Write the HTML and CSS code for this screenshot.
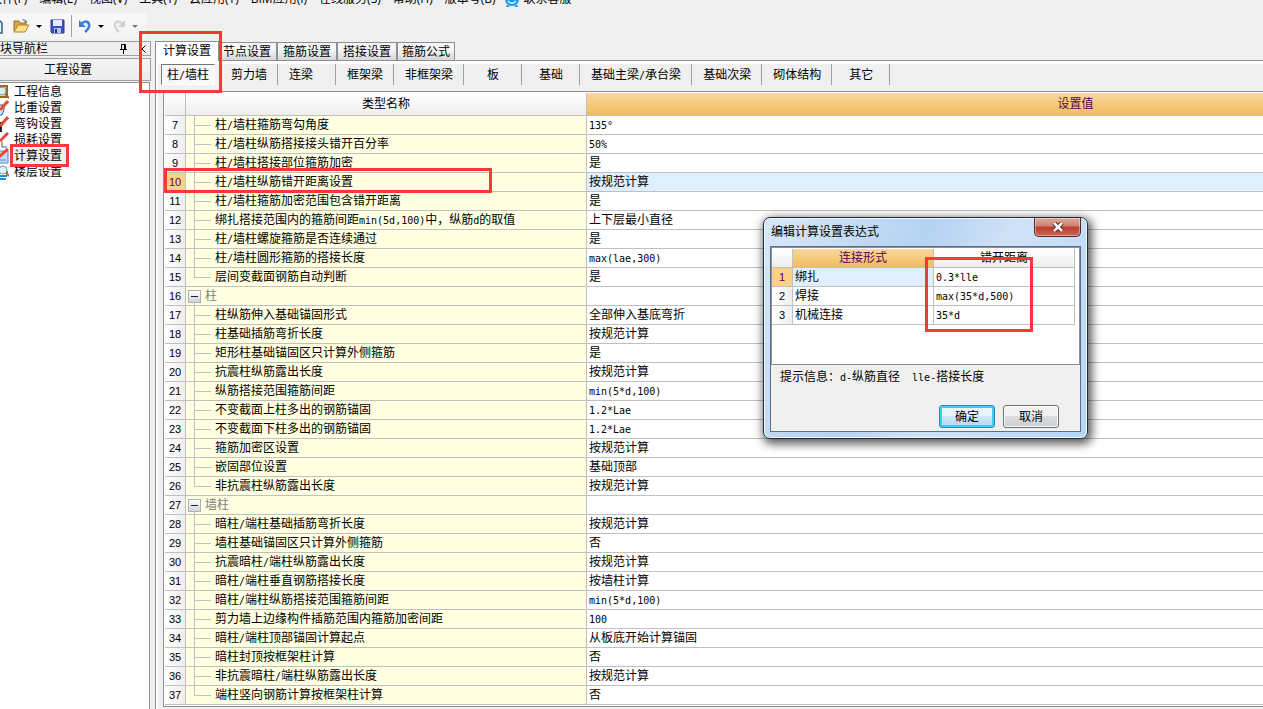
FILE: index.html
```html
<!DOCTYPE html>
<html lang="zh-CN">
<head>
<meta charset="utf-8">
<title>工程设置</title>
<link rel="stylesheet" href="styles.css">
</head>
<body>
<div class="app">
  <nav class="menu">
    <a href="#">文件(F)</a><a href="#">编辑(E)</a><a href="#">视图(V)</a><a href="#">工具(T)</a><a href="#">云应用(Y)</a><a href="#">BIM应用(I)</a><a href="#">在线服务(S)</a><a href="#">帮助(H)</a><a href="#">版本号(B)</a>
    <a href="#" class="service"><svg width="14" height="16" viewBox="0 0 14 16"><circle cx="7" cy="8" r="7" fill="#1c9ceb"/><path d="M2 13l-1 3h4zM12 13l1 3H9z" fill="#1c9ceb"/><path d="M3 9q4 5 8 0v2q-4 4-8 0z" fill="#d9f1ff"/></svg>联系客服</a>
  </nav>
  <div class="toolbar">
    <button class="tool new" aria-label="新建"><svg width="16" height="16" viewBox="0 0 16 16"><path d="M2 1h8l4 4v10H2z" fill="#eaf4ff" stroke="#35598c" stroke-width="1.5"/></svg></button>
    <button class="tool" aria-label="打开"><svg width="17" height="16" viewBox="0 0 17 16"><path d="M1 13V3h5l1 2h6v3" fill="#d9a648" stroke="#9a6d1c"/><path d="M1 14l4-7h11l-4 7z" fill="#ffdf88" stroke="#b98225"/><path d="M8 2q4-2 5 1l1-1v3h-3l1-1q-1-2-4-2z" fill="#6d8fb5"/></svg></button>
    <span class="arrow"></span>
    <button class="tool" aria-label="保存"><svg width="15" height="15" viewBox="0 0 15 15"><path d="M1 1h13v13H2L1 13z" fill="#3c50c8" stroke="#2b3796"/><path d="M3 1h9v6H3z" fill="#e6ecff"/><path d="M4 9h7v5H4z" fill="#b9c3e6"/><path d="M5 10h2v4H5z" fill="#27326e"/></svg></button>
    <span class="divider"></span>
    <button class="tool" aria-label="撤销"><svg width="14" height="14" viewBox="0 0 14 14"><path d="M3 5q6-5 8 0 1 4-4 8" fill="none" stroke="#3f7bd4" stroke-width="2.6"/><path d="M1 1v7h7z" fill="#3f7bd4"/></svg></button>
    <span class="arrow"></span>
    <button class="tool" aria-label="重做"><svg width="14" height="14" viewBox="0 0 14 14"><path d="M11 5q-6-5-8 0-1 4 4 8" fill="none" stroke="#d2d2d2" stroke-width="2.4"/><path d="M13 1v7H6z" fill="#d2d2d2"/></svg></button>
    <span class="arrow dim"></span>
  </div>
  <div class="work">
    <aside class="side">
      <div class="dock"><span>块导航栏</span>
        <button class="tool pin" aria-label="固定"><svg width="7" height="10" viewBox="0 0 7 10"><path d="M1.500.500h4v5h-4zM0 5.500h7M3.500 6v4M4.500 1v4" fill="none" stroke="#000"/></svg></button>
        <button class="tool" aria-label="收起"><svg width="5" height="8" viewBox="0 0 5 8"><path d="M4.500.500L1 4l3.500 3.500" fill="none" stroke="#000"/></svg></button>
      </div>
      <button class="group">工程设置</button>
      <ul class="tree">
        <li><svg width="16" height="16" viewBox="0 0 16 16"><path d="M4 2h10v11H4z" fill="#f4dfa8" stroke="#94671a" stroke-width="2"/><circle cx="9" cy="7" r="4" fill="#d7eefb" stroke="#8d99a3"/><path d="M12 10l4 4" stroke="#a86a26" stroke-width="2"/></svg><a href="#">工程信息</a></li>
        <li><svg width="16" height="16" viewBox="0 0 16 16"><path d="M5 5h6v5l-2 5H5" fill="#cfe3fa" stroke="#2a5b9c"/><path d="M7 10l8-9" stroke="#e94b32" stroke-width="3"/></svg><a href="#">比重设置</a></li>
        <li><svg width="16" height="16" viewBox="0 0 16 16"><path d="M4 7h6l-2 3v5H5" fill="none" stroke="#222" stroke-width="2"/><path d="M7 10l8-9" stroke="#e94b32" stroke-width="3"/></svg><a href="#">弯钩设置</a></li>
        <li><svg width="16" height="16" viewBox="0 0 16 16"><path d="M4 7q3 0 5 3v5h5" fill="none" stroke="#3b5f86"/><path d="M7 9l8-8" stroke="#e94b32" stroke-width="3"/></svg><a href="#">损耗设置</a></li>
        <li class="on"><svg width="16" height="16" viewBox="0 0 16 16"><path d="M3 3h12v12H3z" fill="#c4defa" stroke="#5585bf"/><path d="M7 12h6" stroke="#5585bf"/><path d="M6 9l9-8" stroke="#e94b32" stroke-width="3"/></svg><a href="#">计算设置</a></li>
        <li><svg width="16" height="16" viewBox="0 0 16 16"><path d="M4 4h10M4 8h11M4 12h10M5 15h8" stroke="#2886d2" stroke-width="2"/><circle cx="10" cy="6" r="4" fill="#e0f3fc" stroke="#8d99a3"/><path d="M13 9l3 3" stroke="#a86a26" stroke-width="2"/></svg><a href="#">楼层设置</a></li>
      </ul>
    </aside>
    <main class="main">
      <div class="tabs" role="tablist">
        <button class="tab active">计算设置</button><button class="tab">节点设置</button><button class="tab">箍筋设置</button><button class="tab">搭接设置</button><button class="tab">箍筋公式</button>
      </div>
      <div class="page">
        <div class="kinds">
          <button class="kind pressed">柱<i>/</i>墙柱</button><button class="kind">剪力墙</button><button class="kind left">连梁</button><button class="kind">框架梁</button><button class="kind">非框架梁</button><button class="kind">板</button><button class="kind">基础</button><button class="kind">基础主梁<i>/</i>承台梁</button><button class="kind">基础次梁</button><button class="kind">砌体结构</button><button class="kind">其它</button>
        </div>
        <div class="sheet">
          <table class="grid settings">
            <colgroup><col class="c-num"><col class="c-name"><col class="c-value"></colgroup>
            <thead><tr><th></th><th>类型名称</th><th class="hot">设置值</th></tr></thead>
            <tbody>
              <tr><th>7</th><td>柱<i>/</i>墙柱箍筋弯勾角度</td><td><i>135°</i></td></tr>
              <tr><th>8</th><td>柱<i>/</i>墙柱纵筋搭接接头错开百分率</td><td><i>50%</i></td></tr>
              <tr><th>9</th><td>柱<i>/</i>墙柱搭接部位箍筋加密</td><td>是</td></tr>
              <tr class="sel"><th>10</th><td>柱<i>/</i>墙柱纵筋错开距离设置</td><td>按规范计算</td></tr>
              <tr><th>11</th><td>柱<i>/</i>墙柱箍筋加密范围包含错开距离</td><td>是</td></tr>
              <tr><th>12</th><td>绑扎搭接范围内的箍筋间距<i>min(5d,100)</i>中，纵筋<i>d</i>的取值</td><td>上下层最小直径</td></tr>
              <tr><th>13</th><td>柱<i>/</i>墙柱螺旋箍筋是否连续通过</td><td>是</td></tr>
              <tr><th>14</th><td>柱<i>/</i>墙柱圆形箍筋的搭接长度</td><td><i>max(lae,300)</i></td></tr>
              <tr class="last"><th>15</th><td>层间变截面钢筋自动判断</td><td>是</td></tr>
              <tr class="parent"><th>16</th><td><button class="fold" aria-label="折叠"></button>柱</td><td></td></tr>
              <tr><th>17</th><td>柱纵筋伸入基础锚固形式</td><td>全部伸入基底弯折</td></tr>
              <tr><th>18</th><td>柱基础插筋弯折长度</td><td>按规范计算</td></tr>
              <tr><th>19</th><td>矩形柱基础锚固区只计算外侧箍筋</td><td>是</td></tr>
              <tr><th>20</th><td>抗震柱纵筋露出长度</td><td>按规范计算</td></tr>
              <tr><th>21</th><td>纵筋搭接范围箍筋间距</td><td><i>min(5*d,100)</i></td></tr>
              <tr><th>22</th><td>不变截面上柱多出的钢筋锚固</td><td><i>1.2*Lae</i></td></tr>
              <tr><th>23</th><td>不变截面下柱多出的钢筋锚固</td><td><i>1.2*Lae</i></td></tr>
              <tr><th>24</th><td>箍筋加密区设置</td><td>按规范计算</td></tr>
              <tr><th>25</th><td>嵌固部位设置</td><td>基础顶部</td></tr>
              <tr class="last"><th>26</th><td>非抗震柱纵筋露出长度</td><td>按规范计算</td></tr>
              <tr class="parent"><th>27</th><td><button class="fold" aria-label="折叠"></button>墙柱</td><td></td></tr>
              <tr><th>28</th><td>暗柱<i>/</i>端柱基础插筋弯折长度</td><td>按规范计算</td></tr>
              <tr><th>29</th><td>墙柱基础锚固区只计算外侧箍筋</td><td>否</td></tr>
              <tr><th>30</th><td>抗震暗柱<i>/</i>端柱纵筋露出长度</td><td>按规范计算</td></tr>
              <tr><th>31</th><td>暗柱<i>/</i>端柱垂直钢筋搭接长度</td><td>按墙柱计算</td></tr>
              <tr><th>32</th><td>暗柱<i>/</i>端柱纵筋搭接范围箍筋间距</td><td><i>min(5*d,100)</i></td></tr>
              <tr><th>33</th><td>剪力墙上边缘构件插筋范围内箍筋加密间距</td><td><i>100</i></td></tr>
              <tr><th>34</th><td>暗柱<i>/</i>端柱顶部锚固计算起点</td><td>从板底开始计算锚固</td></tr>
              <tr><th>35</th><td>暗柱封顶按框架柱计算</td><td>否</td></tr>
              <tr><th>36</th><td>非抗震暗柱<i>/</i>端柱纵筋露出长度</td><td>按规范计算</td></tr>
              <tr class="last"><th>37</th><td>端柱竖向钢筋计算按框架柱计算</td><td>否</td></tr>
            </tbody>
          </table>
        </div>
      </div>
    </main>
  </div>
  <section class="dialog" role="dialog" aria-label="编辑计算设置表达式">
    <header class="title"><span>编辑计算设置表达式</span>
      <button class="close" aria-label="关闭"><svg width="12" height="10" viewBox="0 0 12 10"><path d="M2 1l8 8M10 1L2 9" stroke="#46262a" stroke-width="4.500"/><path d="M2 1l8 8M10 1L2 9" stroke="#fff" stroke-width="2.500"/></svg></button>
    </header>
    <div class="body">
      <div class="list">
        <table class="grid exprs">
          <colgroup><col class="c-num"><col class="c-form"><col class="c-dist"></colgroup>
          <thead><tr><th></th><th class="hot">连接形式</th><th>错开距离</th></tr></thead>
          <tbody>
            <tr class="sel"><th>1</th><td>绑扎</td><td><i>0.3*lle</i></td></tr>
            <tr><th>2</th><td>焊接</td><td><i>max(35*d,500)</i></td></tr>
            <tr><th>3</th><td>机械连接</td><td><i>35*d</i></td></tr>
          </tbody>
        </table>
      </div>
      <p class="hint">提示信息：<i>d-</i>纵筋直径　<i>lle-</i>搭接长度</p>
      <div class="actions"><button class="btn primary">确定</button><button class="btn">取消</button></div>
    </div>
  </section>
  <div class="mark mark-tab"></div>
  <div class="mark mark-tree"></div>
  <div class="mark mark-row"></div>
  <div class="mark mark-expr"></div>
</div>
</body>
</html>
```
FILE: styles.css
```css
* { box-sizing: border-box; }
body {
  margin: 0;
  background: #f0f0f0;
  color: #000;
  font: 12px/18px "Liberation Sans", "Noto Sans CJK SC", sans-serif;
}
button { font: inherit; color: inherit; margin: 0; padding: 0; border: 0; background: none; white-space: nowrap; }
a { color: inherit; text-decoration: none; }
i { font: 10px/12px "DejaVu Sans Mono", monospace; }
svg { display: block; flex: none; }
.app { position: relative; min-height: 100vh; overflow: hidden; display: flex; flex-direction: column; }

.menu { display: flex; gap: 12px; height: 16px; margin: -9px 0 0 -10px; line-height: 16px; white-space: nowrap; font-family: "Open Sans", "Noto Sans CJK SC", sans-serif; }
.service { display: flex; gap: 5px; margin-left: -3px; }

.toolbar { display: flex; align-items: center; align-self: flex-start; height: 26px; width: 146px; margin: 6px 0 2px; background: linear-gradient(#f8f8f8, #f4f4f4); }
.tool { flex: none; display: flex; }
.tool.new { margin: 0 9px 0 -12px; }
.arrow { border: 3px solid transparent; border-top-color: #000; border-bottom: 0; margin: 0 8px 0 6px; }
.arrow.dim { border-top-color: #777; }
.divider { width: 1px; height: 22px; background: #a0a0a0; margin: 0 6px 0 6px; }

.work { display: flex; flex: 1; }
.side { display: flex; flex-direction: column; flex: none; width: 151px; }
.dock { display: flex; align-items: center; height: 15px; border: 1px solid #a0a0a0; border-left: 0; padding-right: 4px; }
.dock span { flex: 1; }
.pin { margin-right: 14px; }
.group { height: 23px; margin-top: 2px; padding-right: 14px; border: 1px solid #a0a0a0; border-left: 0; background: linear-gradient(#f4f4f4, #ececec); }
.tree { flex: 1; list-style: none; margin: 1px 1px 0 0; padding: 1px 0; background: #fff; border: solid #8c8e99; border-width: 1px 1px 0 0; }
.tree li { display: flex; height: 16px; line-height: 16px; margin-left: -7px; gap: 3px; }
.tree a { padding: 0 2px; }
.tree .on a { background: #eee; border-radius: 2px; padding-right: 4px; }

.main { flex: 1; min-width: 0; margin-left: 4px; display: flex; flex-direction: column; }
.tabs { display: flex; align-items: flex-end; height: 19px; }
.tab { width: 60px; height: 18px; border: 1px solid #8c8e99; border-bottom: 0; background: linear-gradient(#f6f6f6 40%, #d6d6d8); }
.tab.active { width: 64px; height: 20px; background: #fff; margin: 0 -2px -1px 0; padding-bottom: 1px; z-index: 1; }
.tab:last-child { width: 58px; }
.page { flex: 1; border: solid #8c8e99; border-width: 1px 0 0 1px; padding-left: 7px; box-shadow: inset 2px 3px #fff; }
.kinds { display: flex; height: 30px; padding-top: 3px; margin-left: -2px; }
.kind { min-width: 58px; height: 21px; padding: 0 10px 0 11px; border-right: 1px solid #a0a0a0; }
.kind.left { padding-right: 22px; }
.kind.pressed { min-width: 54px; margin-right: 5px; padding: 0; border: 1px solid #fff; border-top-color: #777; border-left-color: #777; background: #f8f8f8; }
.sheet { overflow: hidden; border: solid #8c8e99; border-width: 1px 0 1px 1px; padding: 1px 0 1px 1px; background: #fff; }

.grid { table-layout: fixed; border-spacing: 0; background: #fff; }
.settings { width: 1400px; }
.exprs { width: 303px; }
.c-num { width: 21px; }
.c-name { width: 401px; }
.c-form { width: 141px; }
.grid th, .grid td { height: 19px; padding: 0; border: solid #c0c0c0; border-width: 0 1px 1px 0; font-weight: normal; line-height: 18px; white-space: nowrap; }
.grid thead th { background: linear-gradient(#fff, #eee); }
.settings thead th { height: 23px; }
.grid tbody th { font-size: 11px; background: linear-gradient(90deg, #fff, #eee); }
.grid td { padding-left: 2px; }
.grid thead .hot { background: linear-gradient(#fad79c, #f0bd5c); color: #5a005a; }
.grid .sel th { background: #fcd088; color: #5a005a; }
.settings .sel td:last-child, .exprs .sel td:nth-child(2) { background: #dfeffe; }

.settings td:nth-child(2) { position: relative; background: #ffffe1; padding: 1px 0 0 29px; line-height: 17px; }
.settings td:nth-child(2)::before { content: ""; position: absolute; left: 8px; top: 0; height: 19px; border-left: 1px solid #c0c0c0; }
.settings td:nth-child(2)::after { content: ""; position: absolute; left: 8px; top: 9px; width: 17px; border-top: 1px solid #c0c0c0; }
.settings .last td:nth-child(2)::before { height: 9px; }
.settings .parent td:nth-child(2) { color: #808080; padding-left: 2px; }
.settings .parent td:nth-child(2)::before { top: 15px; height: 4px; }
.settings .parent td:nth-child(2)::after { content: none; }
.fold { width: 13px; height: 13px; margin-right: 4px; vertical-align: middle; border: 1px solid #b0b0b0; background: linear-gradient(#222, #222) center / 7px 1px no-repeat, linear-gradient(#fff, #ccd4e0); }

.dialog { position: absolute; left: 763px; top: 217px; width: 325px; border: 1px solid #222c38; border-radius: 7px; padding: 0 6px 6px; background: linear-gradient(115deg, #d8e8f8, #b4d2f2 40%, #cfe2f7 60%, #b4d6fa); box-shadow: inset 0 0 0 1px #eef7ff, 2px 3px 10px 2px rgba(0, 0, 0, .65); }
.title { display: flex; align-items: flex-start; height: 28px; }
.title span { flex: 1; padding: 4px 0 0 1px; font-family: "Noto Sans CJK SC", sans-serif; }
.close { display: flex; align-items: center; justify-content: center; width: 47px; height: 19px; border: 1px solid #632026; border-top: 0; border-radius: 0 0 5px 5px; background: linear-gradient(#e0a898, #d08070 45%, #b8402c 50%, #cc6450); box-shadow: inset 0 0 0 1px rgba(255, 255, 255, .4); }
.body { border: 1px solid #5e6f82; background: #f0f0f0; padding-bottom: 3px; }
.list { height: 118px; padding: 1px 1px 1px 0; border: 1px solid #8c8e99; background: #fff; }
.hint { margin: 3px 0 0; padding-left: 9px; }
.actions { display: flex; justify-content: flex-end; gap: 8px; margin: 19px 21px 0 0; }
.btn { width: 56px; height: 23px; border: 1px solid #707070; border-radius: 3px; background: linear-gradient(#f2f2f2 48%, #dcdcdc 50%, #cfcfcf); box-shadow: inset 0 0 0 1px #fafafa; }
.btn.primary { border-color: #3c7fb1; background: linear-gradient(#e8f5fc 48%, #cfe8f7 50%, #b5d8ee); box-shadow: inset 0 0 0 2px #3fcdf5; }

.mark { position: absolute; z-index: 2; border: 3px solid #fb3838; pointer-events: none; }
.mark-tab { left: 139px; top: 31px; width: 83px; height: 62px; }
.mark-tree { left: 10px; top: 144px; width: 59px; height: 23px; }
.mark-row { left: 164px; top: 168px; width: 328px; height: 25px; }
.mark-expr { left: 925px; top: 257px; width: 108px; height: 75px; }
```
